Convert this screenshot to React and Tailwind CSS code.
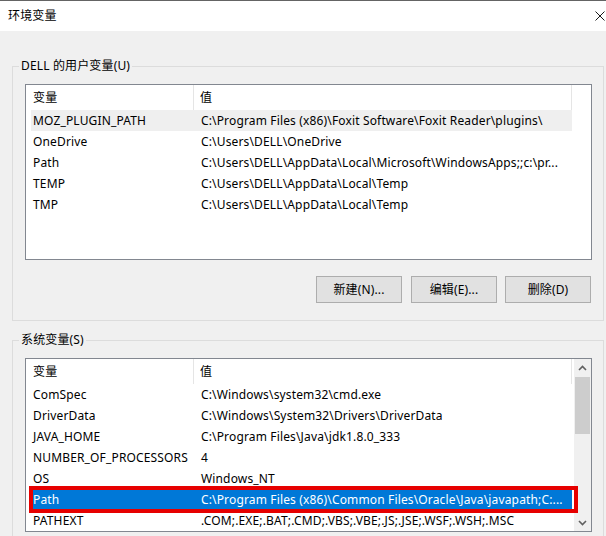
import React from 'react';

const userVars = [
  ['MOZ_PLUGIN_PATH', 'C:\\Program Files (x86)\\Foxit Software\\Foxit Reader\\plugins\\'],
  ['OneDrive', 'C:\\Users\\DELL\\OneDrive'],
  ['Path', 'C:\\Users\\DELL\\AppData\\Local\\Microsoft\\WindowsApps;;c:\\pr...'],
  ['TEMP', 'C:\\Users\\DELL\\AppData\\Local\\Temp'],
  ['TMP', 'C:\\Users\\DELL\\AppData\\Local\\Temp'],
];

const sysVars = [
  ['ComSpec', 'C:\\Windows\\system32\\cmd.exe'],
  ['DriverData', 'C:\\Windows\\System32\\Drivers\\DriverData'],
  ['JAVA_HOME', 'C:\\Program Files\\Java\\jdk1.8.0_333'],
  ['NUMBER_OF_PROCESSORS', '4'],
  ['OS', 'Windows_NT'],
  ['Path', 'C:\\Program Files (x86)\\Common Files\\Oracle\\Java\\javapath;C:...'],
  ['PATHEXT', '.COM;.EXE;.BAT;.CMD;.VBS;.VBE;.JS;.JSE;.WSF;.WSH;.MSC'],
];

// list header: 变量 | 值
const Header = () => (
  <div className="flex h-[25px] items-center">
    <div className="w-[168px] pl-[7px] border-r border-[#e5e5e5] h-full flex items-center">变量</div>
    <div className="w-[378px] pl-[6px] border-r border-[#e5e5e5] h-full flex items-center">值</div>
  </div>
);

const Row = ({ name, value, state }) => {
  const bg =
    state === 'selected' ? 'bg-[#0078d7] text-white' : state === 'hover' ? 'bg-[#efefef]' : '';
  return (
    <div className={`ml-[5px] w-[541px] h-[21px] flex items-center whitespace-nowrap ${bg}`}>
      <div className="w-[163px] pl-[2px] overflow-hidden">{name}</div>
      <div className="flex-1 pl-[7px] overflow-hidden">{value}</div>
    </div>
  );
};

const Button = ({ children }) => (
  <button className="w-[86px] h-[27px] bg-[#e1e1e1] border border-[#adadad] flex items-center justify-center">
    {children}
  </button>
);

const Chevron = ({ down }) => (
  <svg width="9" height="6" viewBox="0 0 9 6" className={down ? 'rotate-180' : ''}>
    <path d="M1 5 L4.5 1.5 L8 5" fill="none" stroke="#606060" strokeWidth="1.6" />
  </svg>
);

export default function App() {
  return (
    <div className="w-[606px] h-[536px] overflow-hidden bg-[#f0f0f0] text-[12px] leading-[16px] tracking-[0.15px] text-black [font-family:'Noto_Sans','Noto_Sans_CJK_SC',sans-serif]">
      {/* title bar */}
      <div className="h-[31px] bg-white border-t border-[#646464] flex items-center justify-between pl-[8px] pr-[1px]">
        <span>环境变量</span>
        <svg width="10" height="10" viewBox="0 0 10 10">
          <path d="M0.5 0.5 L9.5 9.5 M9.5 0.5 L0.5 9.5" stroke="#1a1a1a" strokeWidth="1" />
        </svg>
      </div>

      {/* user variables */}
      <fieldset className="mt-[27px] ml-[12px] w-[592px] border border-[#dcdcdc] pb-[17px]">
        <legend className="ml-[6px] px-[2px] leading-[16px]">DELL 的用户变量(U)</legend>
        <div className="mt-[10px] ml-[12px] w-[567px] h-[176px] bg-white border border-[#828790]">
          <Header />
          {userVars.map(([n, v], i) => (
            <Row key={n} name={n} value={v} state={i === 0 ? 'hover' : ''} />
          ))}
        </div>
        <div className="mt-[16px] ml-[303px] flex gap-[8px]">
          <Button>新建(N)...</Button>
          <div className="ml-[1px]">
            <Button>编辑(E)...</Button>
          </div>
          <Button>删除(D)</Button>
        </div>
      </fieldset>

      {/* system variables */}
      <fieldset className="mt-[11px] ml-[12px] w-[592px] border border-[#dcdcdc] pb-[20px]">
        <legend className="ml-[6px] px-[2px] leading-[16px]">系统变量(S)</legend>
        <div className="relative mt-[10px] ml-[12px] w-[567px] h-[174px] bg-white border border-[#828790] flex">
          <div className="w-[548px]">
            <Header />
            {sysVars.map(([n, v]) => (
              <Row key={n} name={n} value={v} state={n === 'Path' ? 'selected' : ''} />
            ))}
          </div>
          <div className="w-[17px] bg-[#f0f0f0] flex flex-col">
            <div className="h-[18px] flex items-center justify-center">
              <Chevron />
            </div>
            <div className="h-[57px] bg-[#cdcdcd] mx-[1px]" />
            <div className="flex-1" />
            <div className="h-[17px] flex items-center justify-center">
              <Chevron down />
            </div>
          </div>
          {/* red annotation box */}
          <div className="absolute left-[3px] top-[127px] w-[549px] h-[27px] border-[4px] border-[#e60000]" />
        </div>
      </fieldset>
    </div>
  );
}
